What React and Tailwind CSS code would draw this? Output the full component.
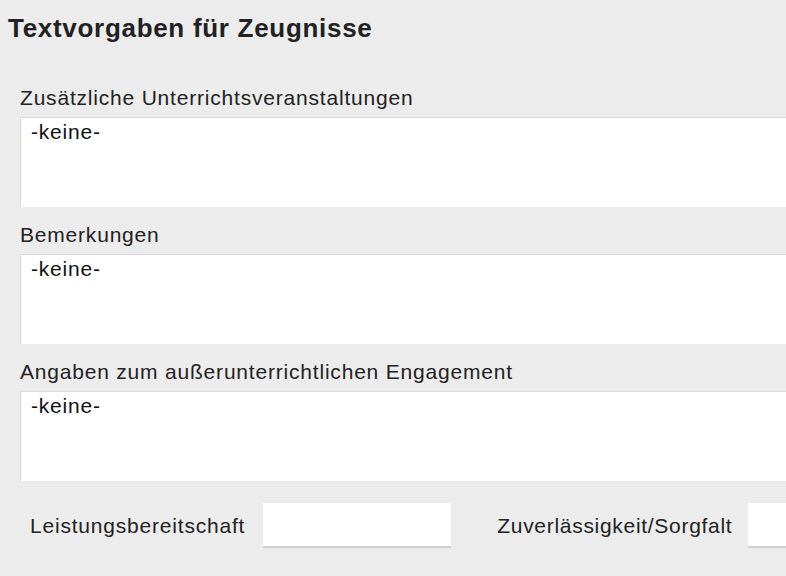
export default function App() {
  const fields = [
    "Zusätzliche Unterrichtsveranstaltungen",
    "Bemerkungen",
    "Angaben zum außerunterrichtlichen Engagement",
  ];

  return (
    <div
      className="w-[786px] h-[576px] overflow-hidden bg-[#ececec] text-[#222222]"
      style={{ fontFamily: '"Liberation Sans", Arial, sans-serif' }}
    >
      <h1 className="pl-[8px] pt-[13px] text-[26px] leading-[30px] font-bold tracking-[0.7px] text-[#222222]">
        Textvorgaben für Zeugnisse
      </h1>

      <div className="pl-[20px] pt-[45px] flex flex-col">
        {fields.map((f, i) => (
          <div key={f} className={i > 0 ? "mt-[18px]" : ""}>
            <div className="text-[21px] leading-[24px] tracking-[0.8px] h-[29px] -mt-[2px] mb-[2px]">{f}</div>
            <div className="h-[90px] bg-white border-t border-l border-[#dadada] px-[10px] pt-[2px] text-[21px] leading-[24px] tracking-[0.8px] text-[#111111]">
              -keine-
            </div>
          </div>
        ))}
      </div>

      <div className="flex items-center pl-[30px] mt-[22px]">
        <span className="text-[21px] leading-[24px] tracking-[0.8px]">Leistungsbereitschaft</span>
        <div className="ml-[18px] w-[188px] h-[45px] bg-white border-b-2 border-[#cfcfcf]" />
        <span className="ml-[46px] text-[21px] leading-[24px] tracking-[0.7px]">Zuverlässigkeit/Sorgfalt</span>
        <div className="ml-[16px] flex-1 h-[45px] bg-white border-b-2 border-[#cfcfcf]" />
      </div>
    </div>
  );
}
